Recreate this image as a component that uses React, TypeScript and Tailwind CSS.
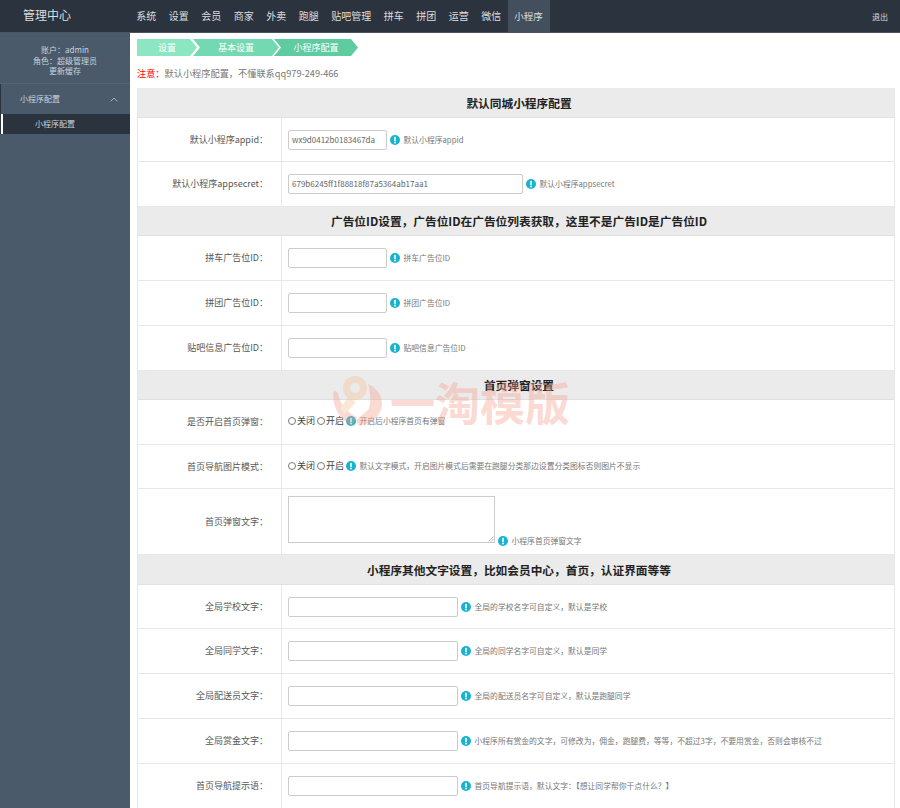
const FONT = "font-['Noto_Sans_CJK_SC','Noto_Sans',sans-serif]";

const nav = ["系统", "设置", "会员", "商家", "外卖", "跑腿", "贴吧管理", "拼车", "拼团", "运营", "微信"];

function Hint({ text }: { text: string }) {
  return (
    <span className="flex items-center shrink-0">
      <svg width="10" height="10" viewBox="0 0 10 10" className="shrink-0">
        <circle cx="5" cy="5" r="5" fill="#17b3d1" />
        <rect x="4.2" y="1.8" width="1.6" height="4.2" rx="0.6" fill="#fff" />
        <circle cx="5" cy="7.5" r="0.95" fill="#fff" />
      </svg>
      <span className="ml-[3.5px] text-[7.8px] leading-none text-[#777] whitespace-nowrap">{text}</span>
    </span>
  );
}

function Title({ text, h }: { text: string; h: string }) {
  return (
    <div className={`${h} flex items-center justify-center pl-[6px] bg-[#ebebeb] border-b border-[#e0e0e0] text-[11.7px] font-bold text-[#222]`}>
      {text}
    </div>
  );
}

function Row({ label, h, children }: { label: string; h: string; children: React.ReactNode }) {
  return (
    <div className={`${h} flex border-b border-[#e7e7e7]`}>
      <div className="w-[144px] shrink-0 flex items-center justify-end pr-[13px] border-r border-[#e7e7e7] text-[9px] text-[#555]">
        {label}
      </div>
      <div className="flex-1 flex items-center pl-[6px]">{children}</div>
    </div>
  );
}

function Field({ w, value, hint }: { w: string; value?: string; hint: string }) {
  return (
    <div className="flex items-center gap-[3px]">
      <div className={`${w} h-[20px] bg-white border border-[#ccc] rounded-[2px] flex items-center pl-[3px] text-[8px] text-[#666] whitespace-nowrap overflow-hidden`}>
        {value}
      </div>
      <Hint text={hint} />
    </div>
  );
}

function Radios({ hint }: { hint: string }) {
  return (
    <div className="flex items-center -mt-[2px]">
      <span className="w-[8px] h-[8px] rounded-full border border-[#777] mr-[1px]" />
      <span className="text-[9px] text-[#444] mr-[1px]">关闭</span>
      <span className="w-[8px] h-[8px] rounded-full border border-[#777] mx-[1px]" />
      <span className="text-[9px] text-[#444] mr-[2px]">开启</span>
      <Hint text={hint} />
    </div>
  );
}

function Crumb({ text, w, ml, bg, first }: { text: string; w: string; ml: string; bg: string; first?: boolean }) {
  return (
    <div
      className={`${w} ${ml} h-[17px] flex items-center justify-center text-[9px] text-white ${bg}`}
      style={{
        clipPath: first
          ? "polygon(0 0, calc(100% - 7px) 0, 100% 50%, calc(100% - 7px) 100%, 0 100%)"
          : "polygon(0 0, calc(100% - 7px) 0, 100% 50%, calc(100% - 7px) 100%, 0 100%, 7px 50%)",
      }}
    >
      {text}
    </div>
  );
}

export default function App() {
  return (
    <div className={`relative w-[900px] h-[808px] overflow-hidden bg-white ${FONT}`}>
      <header className="h-[33px] flex bg-[#2b333e] border-b border-[#4a5561]">
        <div className="w-[130px] shrink-0 pl-[23px] pt-[6px] text-[12px] leading-[18px] text-[#ddd]">管理中心</div>
        <nav className="flex-1 flex text-[10px] text-[#ddd]">
          {nav.map((n) => (
            <span key={n} className="px-[6.25px] leading-[32px] whitespace-nowrap">{n}</span>
          ))}
          <span className="w-[42px] bg-[#434f5c] text-center text-[9.5px] leading-[32px]">小程序</span>
        </nav>
        <span className="pr-[12px] text-[8px] leading-[33px] text-[#ddd]">退出</span>
      </header>

      <div className="flex h-[775px]">
        <aside className="w-[130px] shrink-0 bg-[#4a5a6b] text-[#c9d2da]">
          <div className="h-[51px] pt-[12px] border-b border-[#56646f] flex flex-col items-center text-[8px] leading-[10.5px]">
            <span>账户：admin</span>
            <span>角色：超级管理员</span>
            <span>更新缓存</span>
          </div>
          <div className="h-[30px] flex items-center justify-between pl-[19px] pr-[12px] text-[8px] border-l border-[#2b333e]">
            <span>小程序配置</span>
            <svg width="8" height="5" viewBox="0 0 8 5" fill="none" stroke="#b8c2cc" strokeWidth="0.8">
              <path d="M0.5 4.5 L4 1 L7.5 4.5" />
            </svg>
          </div>
          <div className="h-[20px] bg-[#2b333e] pl-[1px]">
            <div className="h-full flex items-center pl-[32px] border-l-2 border-white text-[8px]">小程序配置</div>
          </div>
        </aside>

        <main className="flex-1 min-w-0 pl-[7px] pr-[5px] pt-[6px]">
          <div className="flex">
            <Crumb first text="设置" w="w-[60px]" ml="ml-0" bg="bg-[#8ce6c2]" />
            <Crumb text="基本设置" w="w-[86px]" ml="-ml-[4px]" bg="bg-[#73d9b2]" />
            <Crumb text="小程序配置" w="w-[84px]" ml="-ml-[5px]" bg="bg-[#5ecba1]" />
          </div>
          <p className="mt-[7px] h-[25px] text-[9.2px] leading-[20px] text-[#777] whitespace-nowrap">
            <span className="text-[#f00]">注意：</span>默认小程序配置，不懂联系qq979-249-466
          </p>

          <div className="border-x border-[#e7e7e7]">
            <Title text="默认同城小程序配置" h="h-[30px]" />
            <Row label="默认小程序appid：" h="h-[44px]">
              <Field w="w-[99px]" value="wx9d0412b0183467da" hint="默认小程序appid" />
            </Row>
            <Row label="默认小程序appsecret：" h="h-[45px]">
              <Field w="w-[235px]" value="679b6245ff1f88818f87a5364ab17aa1" hint="默认小程序appsecret" />
            </Row>
            <Title text="广告位ID设置，广告位ID在广告位列表获取，这里不是广告ID是广告位ID" h="h-[29px]" />
            <Row label="拼车广告位ID：" h="h-[45px]">
              <Field w="w-[99px]" hint="拼车广告位ID" />
            </Row>
            <Row label="拼团广告位ID：" h="h-[45px]">
              <Field w="w-[99px]" hint="拼团广告位ID" />
            </Row>
            <Row label="贴吧信息广告位ID：" h="h-[45px]">
              <Field w="w-[99px]" hint="贴吧信息广告位ID" />
            </Row>
            <Title text="首页弹窗设置" h="h-[29px]" />
            <Row label="是否开启首页弹窗：" h="h-[45px]">
              <Radios hint="开启后小程序首页有弹窗" />
            </Row>
            <Row label="首页导航图片模式：" h="h-[44px]">
              <Radios hint="默认文字模式，开启图片模式后需要在跑腿分类那边设置分类图标否则图片不显示" />
            </Row>
            <Row label="首页弹窗文字：" h="h-[66px]">
              <div className="flex items-end gap-[3px] -mt-[4px]">
                <div className="relative w-[207px] h-[47px] border border-[#ccc] bg-white">
                  <svg width="6" height="6" viewBox="0 0 6 6" className="absolute right-0 bottom-0" stroke="#888" strokeWidth="0.6">
                    <path d="M0.5 5.5 L5.5 0.5 M3 5.5 L5.5 3" />
                  </svg>
                </div>
                <div className="-mb-[3px]">
                  <Hint text="小程序首页弹窗文字" />
                </div>
              </div>
            </Row>
            <Title text="小程序其他文字设置，比如会员中心，首页，认证界面等等" h="h-[30px]" />
            <Row label="全局学校文字：" h="h-[44px]">
              <Field w="w-[170px]" hint="全局的学校名字可自定义，默认是学校" />
            </Row>
            <Row label="全局同学文字：" h="h-[45px]">
              <Field w="w-[170px]" hint="全局的同学名字可自定义，默认是同学" />
            </Row>
            <Row label="全局配送员文字：" h="h-[45px]">
              <Field w="w-[170px]" hint="全局的配送员名字可自定义，默认是跑腿同学" />
            </Row>
            <Row label="全局赏金文字：" h="h-[45px]">
              <Field w="w-[170px]" hint="小程序所有赏金的文字，可修改为，佣金，跑腿费，等等，不超过3字，不要用赏金，否则会审核不过" />
            </Row>
            <Row label="首页导航提示语：" h="h-[45px]">
              <Field w="w-[170px]" hint="首页导航提示语，默认文字：【想让同学帮你干点什么？】" />
            </Row>
          </div>
        </main>
      </div>

      {/* watermark over the page */}
      <div className="absolute left-[332px] top-[376px] flex items-center opacity-40 pointer-events-none">
        <svg width="52" height="52" viewBox="0 0 52 52">
          <path d="M2 14 C-1 28 6 42 20 50 L25 41 C15 37 8 28 6 17 Z" fill="#f6a592" />
          <path d="M36 8 C48 13 52 25 49 34 C45 43 37 48 27 50 L24 44 L36 34 C40 28 38 14 36 8 Z" fill="#f6a592" />
          <path d="M16 21 L8 33 L13 38 L24 26 Z" fill="#f3c49a" />
          <circle cx="23" cy="12" r="8.5" fill="none" stroke="#f3c49a" strokeWidth="7" />
        </svg>
        <span className="ml-[6px] text-[45px] leading-[52px] font-bold text-[#f6a592] whitespace-nowrap">一淘模版</span>
      </div>
    </div>
  );
}
